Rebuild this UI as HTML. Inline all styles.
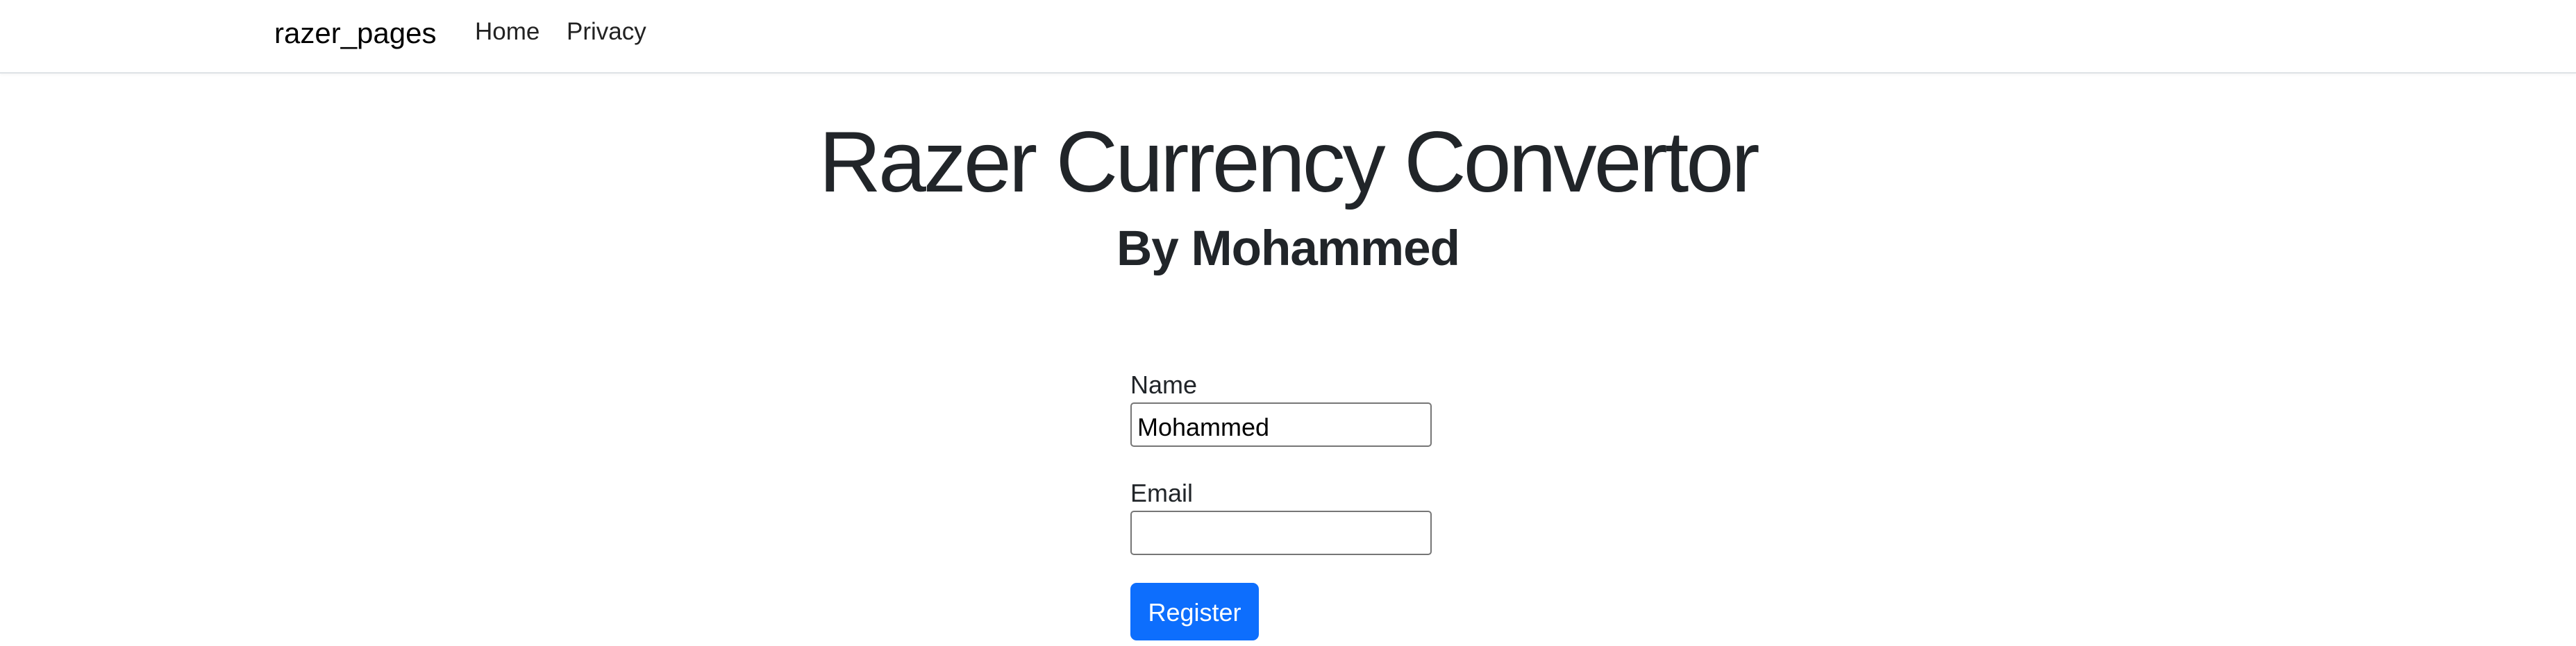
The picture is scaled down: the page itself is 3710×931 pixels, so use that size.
<!DOCTYPE html>
<html><head><meta charset="utf-8"><style>
body{margin:0;width:3710px;height:931px;background:#fff;font-family:"Liberation Sans",sans-serif;color:#212529;position:relative;overflow:hidden}
.nav{position:absolute;left:0;top:0;width:3710px;height:104px;border-bottom:2px solid #dee2e6;box-shadow:0 2px 4px rgba(0,0,0,.04)}
.a{position:absolute;white-space:nowrap}
.brand{left:395px;top:24px;font-size:42px;color:#000}
.nl{top:26px;font-size:35px;color:#222}
h1{position:absolute;margin:0;left:0;width:3710px;text-align:center;top:159px;font-size:124px;font-weight:300;line-height:150px;letter-spacing:-4px;color:#212529}
h2{position:absolute;margin:0;left:0;width:3710px;text-align:center;top:314px;font-size:71px;font-weight:bold;line-height:90px;letter-spacing:-1px}
.lbl{left:1628px;font-size:36px}
.inp{position:absolute;left:1628px;border:2px solid #767676;border-radius:5px;box-sizing:border-box;width:434px;height:64px}
.btn{position:absolute;left:1628px;top:840px;width:185px;height:83px;background:#0d6efd;border-radius:9px;color:#fff;font-size:36px;text-align:center;line-height:86px}
</style></head><body>
<div class="nav"></div>
<div class="a brand">razer_pages</div>
<div class="a nl" style="left:684px">Home</div>
<div class="a nl" style="left:816px">Privacy</div>
<h1>Razer Currency Convertor</h1>
<h2>By Mohammed</h2>
<div class="a lbl" style="top:534px">Name</div>
<div class="inp" style="top:580px"><span style="position:absolute;left:8px;top:13px;font-size:36px;color:#000">Mohammed</span></div>
<div class="a lbl" style="top:690px">Email</div>
<div class="inp" style="top:736px"></div>
<div class="btn">Register</div>
</body></html>
